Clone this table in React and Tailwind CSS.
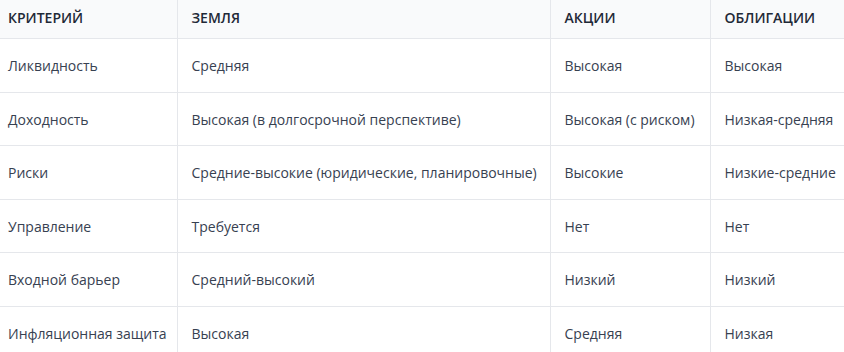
import React from 'react';

const rows = [
  ['Ликвидность', 'Средняя', 'Высокая', 'Высокая'],
  ['Доходность', 'Высокая (в долгосрочной перспективе)', 'Высокая (с риском)', 'Низкая-средняя'],
  ['Риски', 'Средние-высокие (юридические, планировочные)', 'Высокие', 'Низкие-средние'],
  ['Управление', 'Требуется', 'Нет', 'Нет'],
  ['Входной барьер', 'Средний-высокий', 'Низкий', 'Низкий'],
  ['Инфляционная защита', 'Высокая', 'Средняя', 'Низкая'],
];

const App = () => {
  return (
    <div className="w-[844px] h-[352px] overflow-hidden bg-white font-['Open_Sans','Noto_Sans',sans-serif]">
      <table className="-ml-[6px] border-collapse table-fixed w-[880px] text-[14px]">
        <colgroup>
          <col className="w-[183px]" />
          <col className="w-[373px]" />
          <col className="w-[160px]" />
          <col className="w-[164px]" />
        </colgroup>
        <thead>
          <tr className="bg-[#f9fafb] border-b border-[#e5e7eb] text-left">
            {['Критерий', 'Земля', 'Акции', 'Облигации'].map((h, i) => (
              <th
                key={h}
                className={`px-[14px] pt-[7px] pb-[10px] leading-[21px] font-semibold uppercase text-[#1f2937] ${i > 0 ? 'border-l border-[#e5e7eb]' : ''}`}
              >
                {h}
              </th>
            ))}
          </tr>
        </thead>
        <tbody>
          {rows.map((r) => (
            <tr key={r[0]} className="border-b border-[#e5e7eb]">
              {r.map((c, i) => (
                <td
                  key={i}
                  className={`px-[14px] pt-[17px] pb-[15px] leading-[20.5px] text-[#374151] whitespace-nowrap ${i > 0 ? 'border-l border-[#e5e7eb]' : ''}`}
                >
                  {c}
                </td>
              ))}
            </tr>
          ))}
        </tbody>
      </table>
    </div>
  );
};

export default App;
